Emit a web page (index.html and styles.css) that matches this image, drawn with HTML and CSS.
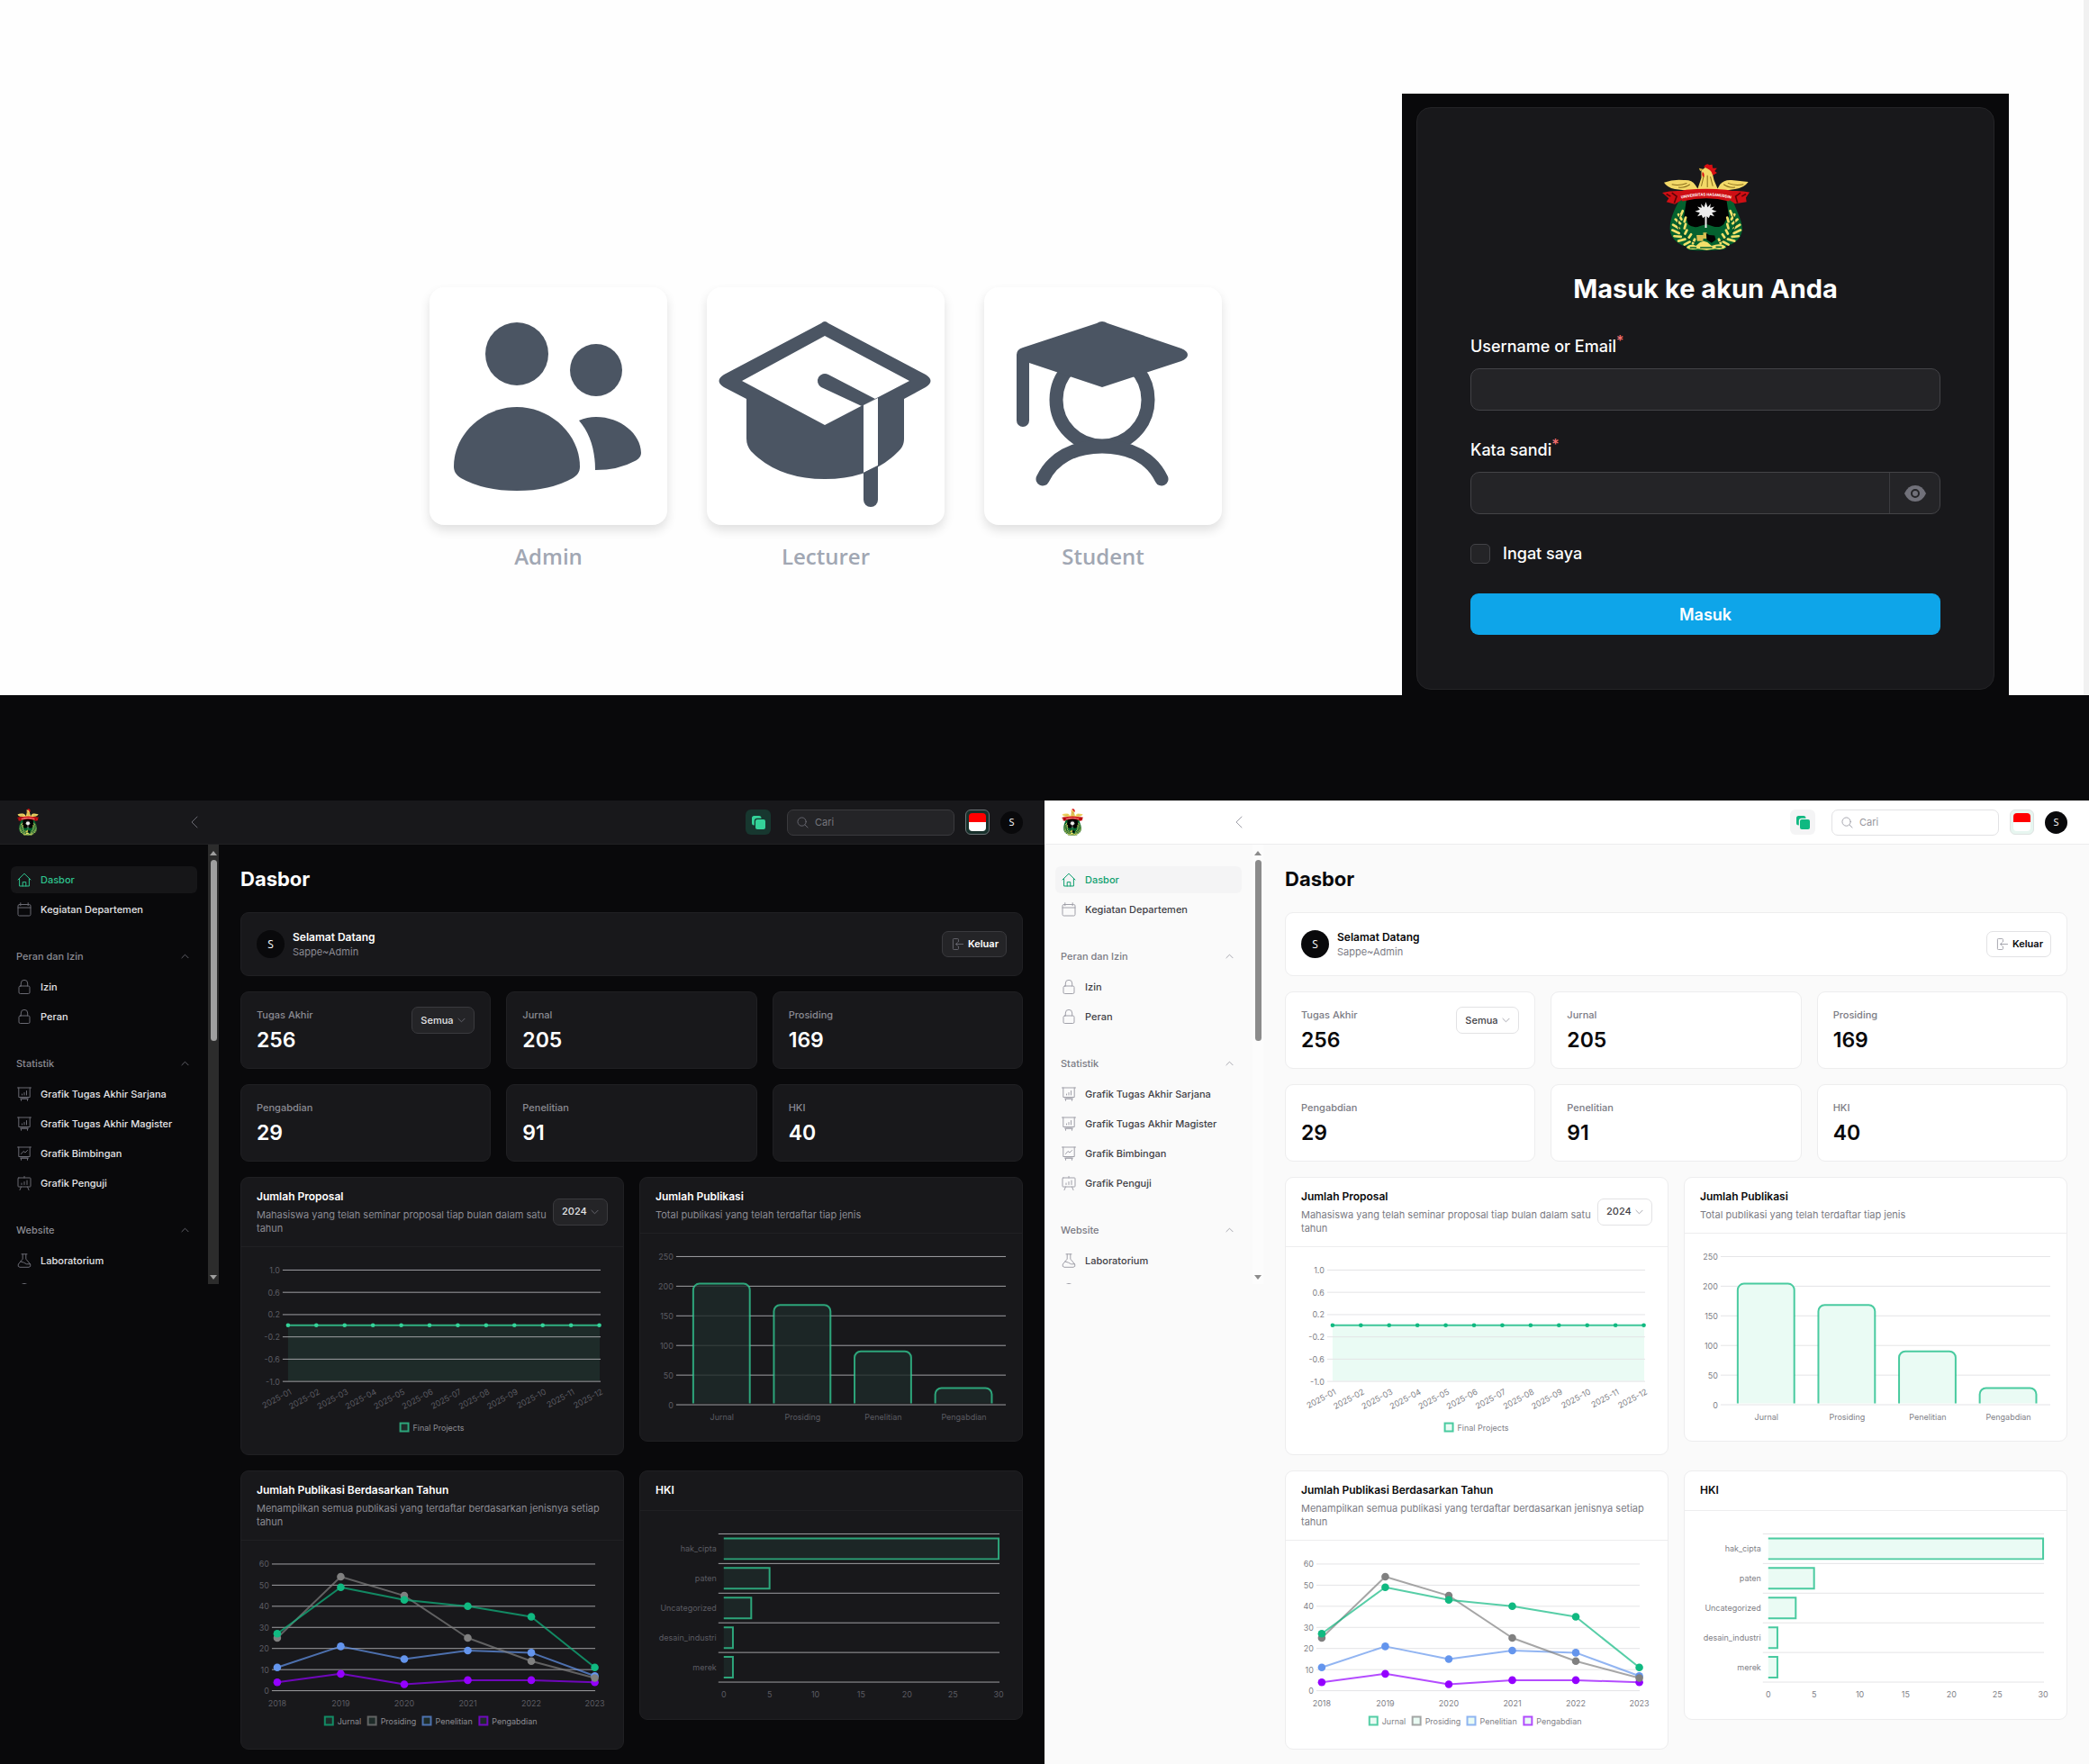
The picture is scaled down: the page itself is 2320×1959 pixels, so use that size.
FILE: index.html
```html
<!DOCTYPE html>
<html lang="id">
<head>
<meta charset="utf-8">
<meta name="viewport" content="width=device-width, initial-scale=1">
<title>Dasbor Departemen</title>
<link rel="stylesheet" href="styles.css">
</head>
<body>

<svg class="sprite" width="0" height="0" aria-hidden="true">
  <symbol id="logo" viewBox="20 22 290 290" preserveAspectRatio="none">
    <path d="M84 128C62 170 44 205 46 240C49 275 82 296 112 298C100 290 96 306 112 308Q167 312 224 306C238 302 230 290 222 296C256 292 284 272 286 238C286 206 262 172 250 128Z" fill="#04622f"/>
    <path d="M102 130L92 200Q104 206 106 222Q124 238 146 228L167 222L190 230Q212 236 226 220Q230 206 242 200L232 130Z" fill="#020202"/>
    <g stroke="#f3e06a" stroke-width="8" stroke-linecap="round" fill="none">
      <path d="M88 178l-6 14M74 190l10 16M64 206l16 14M56 224l20 12M54 242l22 10M60 262l22 2M74 278l22-6M94 290l18-10M98 200l-4 14M98 222l-4 14M102 242l-6 12M116 256l-8 12M128 272l-6 14"/>
      <path d="M246 178l6 14M260 190l-10 16M270 206l-16 14M278 224l-20 12M280 242l-22 10M274 262l-22 2M260 278l-22-6M240 290l-18-10M236 200l4 14M236 222l4 14M232 242l6 12M220 256l8 12M208 272l6 14"/>
    </g>
    <path d="M80 190Q58 230 92 260Q110 276 130 284M254 190Q276 230 242 260Q226 276 204 284" fill="none" stroke="#0b3f1f" stroke-width="3"/>
    <path d="M100 300Q112 284 132 294L146 282L158 278L170 282L184 294Q216 282 232 298Q220 310 196 304L168 308L138 304Q114 310 100 300Z" fill="#f3e06a"/>
    <path d="M112 300h22M146 300h40M198 298h20" stroke="#04622f" stroke-width="5"/>
    <path d="M134 258h22v-8h12v20h-12v8h-20z" fill="#d8bf50"/>
    <path d="M166 252l10 6 18 2 4 14-14 10-16-10z" fill="#020202"/>
    <path d="M165 148l6 18 10-12-2 14 14-4-8 10 16 6-16 4 8 12-14-4-4 10-7-6v38h-6v-38l-7 6-4-10-14 4 8-12-16-4 16-6-8-10 14 4-2-14 10 12z" fill="#eee"/>
    <path d="M26 84Q58 72 92 76Q118 74 130 92L138 104L150 68L150 44L166 32L184 42L192 76L204 104L212 90Q226 74 250 76L306 82Q292 102 262 106L232 110H100L62 106Q36 100 26 84Z" fill="#f3d968"/>
    <path d="M52 90q24 6 50-4M74 100q22 2 38-10M290 90q-28 6-52-4M262 100q-22 2-38-10M158 62l-8 34M170 60v40M180 64l8 32" fill="none" stroke="#8a6d1c" stroke-width="3"/>
    <path d="M142 36l16 4-12 6z" fill="#d9b43e"/>
    <path d="M158 32Q168 18 176 26L186 24L188 36L202 36L194 46L202 52L188 60Q184 44 170 38Z" fill="#d80f12"/>
    <path d="M154 48q8 6 4 18q-8-4-4-18z" fill="#d80f12"/>
    <path d="M20 118Q50 110 84 112L100 108Q168 102 232 108L252 112Q284 110 310 116L298 134L300 148L262 154L244 142L242 146Q168 126 88 146L84 142L62 156L34 148L42 136Z" fill="#cf0f14"/>
    <path d="M52 118l16 12-8 22M280 118l-16 12 6 22M34 122l14 8M298 122l-14 8" stroke="#5e0306" stroke-width="5" fill="none"/>
    <path id="ribbon" d="M80 138Q166 118 252 138" fill="none"/>
    <text font-family="Roboto, sans-serif" font-size="13" font-weight="700" fill="#fff"><textPath href="#ribbon" startOffset="50%" text-anchor="middle">UNIVERSITAS HASANUDDIN</textPath></text>
  </symbol>
  <symbol id="i-home" viewBox="0 0 16 16"><path d="M1 8L8 1.2 15 8M2.6 6.6V15h10.8V6.6M6.2 15v-4.4h3.6V15"/></symbol>
  <symbol id="i-calendar" viewBox="0 0 16 16"><rect x="1" y="2.5" width="14" height="12.500" rx="1.500"/><path d="M1 6h14M3.800.7v3M12.200.7v3"/></symbol>
  <symbol id="i-lock" viewBox="0 0 16 16"><rect x="2" y="7" width="12" height="8.500" rx="1.500"/><path d="M4.300 7V4a3.700 3.700 0 0 1 7.400 0v3"/></symbol>
  <symbol id="i-board-bars" viewBox="0 0 16 16"><path d="M.5 1h15M1.800 1v10.500h12.400V1M4.500 15.300v-2.200h7v2.200M3.500 13.100h9M5.500 9v-1M8 9V6.500M10.500 9V4.500"/></symbol>
  <symbol id="i-board-line" viewBox="0 0 16 16"><path d="M.5 1h15M1.800 1v10.500h12.400V1M4.500 15.300v-2.200h7v2.200M3.500 13.100h9M4.500 8.500l2.500-3 2 1.500 2.500-2.500"/></symbol>
  <symbol id="i-easel" viewBox="0 0 16 16"><rect x="1" y="2" width="14" height="10" rx=".8"/><path d="M8 .3V2M4.500 12l-1.500 3.500M11.500 12l1.500 3.500M5 9.500V8M8 9.500v-3M11 9.500V5"/></symbol>
  <symbol id="i-flask" viewBox="0 0 16 16"><path d="M5 .8h6M6.200.8v5.400L1.300 12Q.3 15 3 15.300h10Q15.700 15 14.700 12L9.800 6.200V.8M4 9q4 1 6.500 2.800h4"/></symbol>
  <symbol id="i-up" viewBox="0 0 10 6"><path d="M1 5l4-4 4 4"/></symbol>
  <symbol id="i-down" viewBox="0 0 10 6"><path d="M1 1l4 4 4-4"/></symbol>
  <symbol id="i-left" viewBox="0 0 8 14"><path d="M7 1L1 7l6 6"/></symbol>
  <symbol id="i-search" viewBox="0 0 14 14"><circle cx="6" cy="6" r="5"/><path d="M9.800 9.800L13 13"/></symbol>
  <symbol id="i-exit" viewBox="0 0 14 14"><path d="M8 4V1.500a1 1 0 0 0-1-1H2.500a1 1 0 0 0-1 1v11a1 1 0 0 0 1 1H7a1 1 0 0 0 1-1V10M13.500 7H5M7 5L5 7l2 2"/></symbol>
  <symbol id="i-copy" viewBox="0 0 15 15"><path d="M2.500 0H8a2.500 2.500 0 0 1 2.500 2.500v.3H5.800A3 3 0 0 0 2.800 5.800v4.700h-.3A2.500 2.500 0 0 1 0 8V2.500A2.500 2.500 0 0 1 2.500 0Z"/><rect x="4" y="4" width="11" height="11" rx="2"/></symbol>
</svg>

<section class="hero">
  <nav class="roles" aria-label="Roles">
    <a class="role" href="#admin">
      <svg class="role-art" viewBox="0 0 264 264" aria-hidden="true">
        <circle cx="97" cy="74" r="35"/><circle cx="185" cy="92" r="29"/>
        <path d="M97 133C60 133 27 163 27 199C27 205 30 209 35 212Q60 226 97 226Q134 226 159 212C164 209 167 205 167 199C167 163 134 133 97 133Z"/>
        <path d="M166 148Q175 144 185 144C212 144 235 163 235 184C235 188 232 191 228 193Q210 203 184 203C184 180 178 162 166 148Z"/>
      </svg>
      <span class="role-name">Admin</span>
    </a>
    <a class="role" href="#lecturer">
      <svg class="role-art" viewBox="0 0 264 264" aria-hidden="true">
        <path fill-rule="evenodd" d="M127 40Q131 36 135 40L243 97Q254 104 243 111L219 124V168C219 174 217 178 213 182Q183 213 131 213Q79 213 49 182C46 178 44 174 44 168V124L19 111Q8 104 19 97ZM131 54L39 104L131 153L225 104Z"/>
        <path d="M135 97L187 124L172 132L127 111A8 8 0 0 1 135 97Z"/>
        <path class="cut" d="M174 131L190 123V198L174 206Z"/>
        <path d="M174 206L190 198V236a8 8 0 0 1-16 0Z"/>
      </svg>
      <span class="role-name">Lecturer</span>
    </a>
    <a class="role" href="#student">
      <svg class="role-art" viewBox="0 0 264 264" aria-hidden="true">
        <g class="line"><circle cx="131" cy="125" r="51"/><path d="M65 213C76 190 99 177 131 177C163 177 186 190 197 213"/></g>
        <path d="M125 40Q131 36 137 40L219 68Q226 71 226 75Q226 79 219 82L131 111L50 84V148a7 7 0 0 1-14 0V75Q36 69 43 67Z"/>
      </svg>
      <span class="role-name">Student</span>
    </a>
  </nav>

  <div class="login-frame">
    <form class="login">
      <svg class="login-logo" role="img" aria-label="Logo"><use href="#logo"/></svg>
      <h1 class="login-title">Masuk ke akun Anda</h1>
      <div class="field">
        <label class="field-label" for="username">Username or Email<sup class="req">*</sup></label>
        <input class="box" id="username" type="text">
      </div>
      <div class="field">
        <label class="field-label" for="password">Kata sandi<sup class="req">*</sup></label>
        <div class="box box-group">
          <input class="box-input" id="password" type="password">
          <button class="reveal" type="button" aria-label="Tampilkan kata sandi">
            <svg width="24" height="18" viewBox="0 0 24 18" aria-hidden="true"><path d="M12 0Q20 0 24 9Q20 18 12 18Q4 18 0 9Q4 0 12 0Z" fill="#71717a"/><circle cx="12" cy="9" r="4" fill="none" stroke="#242427" stroke-width="2"/></svg>
          </button>
        </div>
      </div>
      <label class="remember"><input class="tick" type="checkbox">Ingat saya</label>
      <button class="submit" type="submit">Masuk</button>
    </form>
  </div>
</section>

<main class="panels">
  <div class="panel dark"></div>
  <div class="panel light"></div>
</main>

<template id="dashboard">
  <header class="topbar">
    <div class="brand">
      <svg class="brand-logo" role="img" aria-label="Logo"><use href="#logo"/></svg>
      <button class="plain" type="button" aria-label="Ciutkan"><svg class="ico" width="8" height="14"><use href="#i-left"/></svg></button>
    </div>
    <div class="tools">
      <button class="copy" type="button" aria-label="Salin"><svg width="15" height="15"><use href="#i-copy"/></svg></button>
      <label class="search"><svg class="ico" width="13" height="13"><use href="#i-search"/></svg><input type="search" placeholder="Cari" aria-label="Cari"></label>
      <button class="flag" type="button" aria-label="Bahasa Indonesia"><span class="flag-art"></span></button>
      <span class="avatar">S</span>
    </div>
  </header>
  <div class="workspace">
    <aside class="side">
      <nav class="side-nav">
        <div class="group">
          <a class="item active" href="#dasbor"><svg class="ico"><use href="#i-home"/></svg>Dasbor</a>
          <a class="item" href="#kegiatan"><svg class="ico"><use href="#i-calendar"/></svg>Kegiatan Departemen</a>
        </div>
        <div class="group">
          <button class="group-head" type="button">Peran dan Izin<svg class="ico" width="9" height="6"><use href="#i-up"/></svg></button>
          <a class="item" href="#izin"><svg class="ico"><use href="#i-lock"/></svg>Izin</a>
          <a class="item" href="#peran"><svg class="ico"><use href="#i-lock"/></svg>Peran</a>
        </div>
        <div class="group">
          <button class="group-head" type="button">Statistik<svg class="ico" width="9" height="6"><use href="#i-up"/></svg></button>
          <a class="item" href="#sarjana"><svg class="ico"><use href="#i-board-bars"/></svg>Grafik Tugas Akhir Sarjana</a>
          <a class="item" href="#magister"><svg class="ico"><use href="#i-board-bars"/></svg>Grafik Tugas Akhir Magister</a>
          <a class="item" href="#bimbingan"><svg class="ico"><use href="#i-board-line"/></svg>Grafik Bimbingan</a>
          <a class="item" href="#penguji"><svg class="ico"><use href="#i-easel"/></svg>Grafik Penguji</a>
        </div>
        <div class="group">
          <button class="group-head" type="button">Website<svg class="ico" width="9" height="6"><use href="#i-up"/></svg></button>
          <a class="item" href="#lab"><svg class="ico"><use href="#i-flask"/></svg>Laboratorium</a>
          <a class="item" href="#next" aria-label="Berikutnya"><svg class="ico"><use href="#i-lock"/></svg></a>
        </div>
      </nav>
      <div class="scroll" aria-hidden="true"><i class="arrow-up"></i><i class="thumb"></i><i class="arrow-down"></i></div>
    </aside>
    <div class="content">
      <h2 class="page-title">Dasbor</h2>
      <section class="card welcome">
        <span class="avatar big">S</span>
        <div class="who"><h3 class="card-title">Selamat Datang</h3><p class="muted">Sappe~Admin</p></div>
        <button class="logout" type="button"><svg class="ico" width="13" height="13"><use href="#i-exit"/></svg>Keluar</button>
      </section>
      <section class="stats">
        <div class="card stat"><div><p class="muted medium">Tugas Akhir</p><p class="value">256</p></div>
          <span class="pick"><select aria-label="Filter tugas akhir"><option>Semua</option></select><svg class="ico" width="9" height="6"><use href="#i-down"/></svg></span></div>
        <div class="card stat"><div><p class="muted medium">Jurnal</p><p class="value">205</p></div></div>
        <div class="card stat"><div><p class="muted medium">Prosiding</p><p class="value">169</p></div></div>
        <div class="card stat"><div><p class="muted medium">Pengabdian</p><p class="value">29</p></div></div>
        <div class="card stat"><div><p class="muted medium">Penelitian</p><p class="value">91</p></div></div>
        <div class="card stat"><div><p class="muted medium">HKI</p><p class="value">40</p></div></div>
      </section>
      <section class="charts">
        <article class="card chart">
          <div class="chart-head"><div><h3 class="card-title">Jumlah Proposal</h3><p class="muted">Mahasiswa yang telah seminar proposal tiap bulan dalam satu tahun</p></div>
            <span class="pick"><select aria-label="Tahun proposal"><option>2024</option></select><svg class="ico" width="9" height="6"><use href="#i-down"/></svg></span></div>
          <div class="plot" data-chart="proposal"></div>
        </article>
        <article class="card chart">
          <div class="chart-head"><div><h3 class="card-title">Jumlah Publikasi</h3><p class="muted">Total publikasi yang telah terdaftar tiap jenis</p></div></div>
          <div class="plot" data-chart="publikasi"></div>
        </article>
        <article class="card chart">
          <div class="chart-head"><div><h3 class="card-title">Jumlah Publikasi Berdasarkan Tahun</h3><p class="muted">Menampilkan semua publikasi yang terdaftar berdasarkan jenisnya setiap tahun</p></div></div>
          <div class="plot" data-chart="tahunan"></div>
        </article>
        <article class="card chart">
          <div class="chart-head"><div><h3 class="card-title">HKI</h3></div></div>
          <div class="plot" data-chart="hki"></div>
        </article>
      </section>
    </div>
  </div>
</template>

<script src="charts.js"></script>
</body>
</html>
```
FILE: styles.css
```css
* { box-sizing: border-box; }
body { margin: 0; background: #09090b; font-family: Inter, "Liberation Sans", sans-serif; }
h1, h2, h3, p { margin: 0; }
a { color: inherit; text-decoration: none; }
button, input, select { font: inherit; color: inherit; margin: 0; }
svg { display: block; flex: none; }
.sprite { display: none; }

/* Role picker and login */
.hero { display: flex; justify-content: space-between; align-items: flex-start; padding: 104px 83px 0 477px; background: #fefefe; border-right: 6px solid #f1f1f1; }
.roles { display: flex; gap: 44px; padding-top: 215px; }
.role { display: flex; flex-direction: column; gap: 18px; align-items: center; }
.role-art { width: 264px; height: 264px; border-radius: 16px; background: #fff; box-shadow: 0 6px 12px rgba(0, 0, 0, .12); fill: #4b5563; }
.role-art .cut { fill: #fff; }
.role-art .line { fill: none; stroke: #4b5563; stroke-width: 15px; stroke-linecap: round; }
.role-name { font: 600 24px/34px "Open Sans", "Noto Sans", sans-serif; color: #a1a7b3; }

.login-frame { flex: none; width: 674px; padding: 15px 16px 6px; background: #09090b; }
.login { display: flex; flex-direction: column; gap: 32px; padding: 62px 59px 60px; border: 1px solid #242427; border-radius: 16px; background: #18181b; color: #fff; font-size: 18px; font-weight: 500; }
.login-logo { align-self: center; width: 97px; height: 97px; }
.login-title { margin-top: -11px; font-size: 29px; line-height: 41px; font-weight: 700; text-align: center; }
.field { display: flex; flex-direction: column; gap: 12px; }
.field-label { line-height: 24px; }
.req { color: #f87171; font-size: 16px; line-height: 1px; }
.box { width: 100%; height: 47px; border: 1px solid #434347; border-radius: 10px; background: #242427; padding: 0 14px; outline: none; }
.box-group { display: flex; padding: 0; }
.box-input { flex: 1; min-width: 0; border: 0; background: none; padding: 0 14px; outline: none; }
.reveal { display: flex; align-items: center; justify-content: center; width: 56px; border: 0; border-left: 1px solid #3b3b3f; background: none; }
.remember { display: flex; align-items: center; gap: 14px; line-height: 24px; }
.tick { appearance: none; width: 22px; height: 22px; border: 1px solid #434347; border-radius: 5px; background: #242427; }
.submit { height: 46px; border: 0; border-radius: 9px; background: #0ea5e9; color: #fff; font-weight: 600; }

/* Dashboards */
.panels { display: grid; grid-template-columns: 1fr 1fr; padding-top: 117px; }
.panel { background: var(--bg); color: var(--text); font-size: 11px; line-height: 15px; }
.dark {
  --bg: #09090b; --surface: #18181b; --edge: #202023; --text: #fff; --nav: #e4e4e7; --muted: #8b8b93; --icon: #6a6a73;
  --active: #161618; --accent: #2fc48e; --control: #242427; --control-edge: #3a3a3e; --copy: #17372f; --copy-icon: #34d399; --ring: #6a7275; --ringbg: #17302b;
  --grid: #a0a0a4; --tick: #5c5c63; --legend: #8d8d94; --fill: #1e2b29; --bar: #34d399; --track: #2c2c2c; --thumb: #9f9f9f;
}
.light {
  --bg: #fafafa; --surface: #fff; --edge: #ededee; --text: #09090b; --nav: #3f3f46; --muted: #7b7b84; --icon: #a0a0a9;
  --active: #f4f4f5; --accent: #0d9f6e; --control: #fff; --control-edge: #e2e2e4; --copy: #f4f4f5; --copy-icon: #10b981; --ring: #dfe3e2; --ringbg: #e7f6f0;
  --grid: #e4e4e6; --tick: #808086; --legend: #808086; --fill: #eafbf4; --bar: #10b981; --track: #fcfcfc; --thumb: #8b8b8b;
}
.ico { fill: none; stroke: var(--icon); stroke-width: 1px; stroke-linecap: round; stroke-linejoin: round; }
.plain { border: 0; background: none; padding: 0; }

.topbar { display: flex; justify-content: space-between; align-items: center; height: 49px; padding: 0 24px 0 19px; background: var(--surface); border-bottom: 1px solid var(--edge); }
.brand { display: flex; justify-content: space-between; align-items: center; width: 201px; }
.brand-logo { width: 24px; height: 30px; }
.tools { display: flex; align-items: center; gap: 12px; }
.copy { display: flex; align-items: center; justify-content: center; width: 28px; height: 28px; margin-right: 6px; padding: 0; border: 0; border-radius: 6px; background: var(--copy); fill: var(--copy-icon); }
.search { display: flex; align-items: center; gap: 7px; width: 186px; height: 29px; padding: 0 10px; border: 1px solid var(--control-edge); border-radius: 7px; background: var(--control); }
.search input { flex: 1; min-width: 0; border: 0; padding: 0; background: none; outline: none; appearance: none; }
.search input::placeholder { color: var(--muted); opacity: .8; }
.flag { width: 27px; height: 28px; padding: 3px; border: 1px solid var(--ring); border-radius: 6px; background: var(--ringbg); }
.flag-art { display: block; height: 20px; border-radius: 4px; background: linear-gradient(#f00 50%, #fff 50%); }
.avatar { display: flex; align-items: center; justify-content: center; width: 25px; height: 25px; border-radius: 50%; background: #09090b; color: #fff; font: 400 11px/14px "Open Sans", sans-serif; }
.avatar.big { width: 31px; height: 31px; font-size: 12px; }

.workspace { display: flex; align-items: flex-start; }
.side { display: flex; flex: none; width: 243px; height: 488px; overflow: hidden; }
.side-nav { display: flex; flex: 1; flex-direction: column; gap: 22px; padding: 24px 12px 0; }
.group { display: flex; flex-direction: column; gap: 3px; }
.group-head { display: flex; flex: none; justify-content: space-between; align-items: center; height: 30px; margin-bottom: 1px; padding: 0 9px 0 6px; border: 0; background: none; color: var(--muted); font-weight: 500; }
.item { display: flex; flex: none; align-items: center; gap: 10px; height: 30px; padding: 0 7px; border-radius: 6px; color: var(--nav); font-weight: 500; }
.item .ico { width: 16px; height: 16px; }
.item.active { background: var(--active); color: var(--accent); }
.item.active .ico { stroke: var(--accent); }
.scroll { display: flex; flex-direction: column; align-items: center; width: 12px; padding: 7px 0 5px; background: var(--track); }
.thumb { width: 7px; height: 201px; margin: 5px 0 auto; border-radius: 4px; background: var(--thumb); }
.arrow-up, .arrow-down { border: 4px solid transparent; border-top-width: 0; border-bottom: 5px solid var(--thumb); }
.arrow-down { transform: rotate(180deg); }

.content { flex: 1; min-width: 0; display: flex; flex-direction: column; gap: 17px; padding: 24px 24px 17px; }
.page-title { margin-bottom: 6px; font-size: 22px; line-height: 28px; font-weight: 700; }
.card { border: 1px solid var(--edge); border-radius: 9px; background: var(--surface); }
.card-title { font-size: 12px; line-height: 20px; font-weight: 600; }
.muted { color: var(--muted); }
.medium { font-weight: 500; }
.welcome { display: flex; align-items: center; gap: 9px; height: 71px; padding: 0 17px; }
.who { flex: 1; }
.who .card-title { line-height: 18px; }
.logout { display: flex; align-items: center; gap: 5px; height: 29px; padding: 0 8px 0 10px; border: 1px solid var(--control-edge); border-radius: 7px; background: var(--control); font-weight: 600; }
.stats { display: grid; grid-template-columns: repeat(3, 1fr); gap: 17px; }
.stat { display: flex; justify-content: space-between; align-items: flex-start; height: 86px; padding: 16px 17px; }
.stat .muted { line-height: 18px; }
.value { font-size: 23px; line-height: 38px; font-weight: 600; }
.pick { position: relative; flex: none; }
.pick select { appearance: none; display: block; height: 30px; padding: 0 22px 0 9px; border: 1px solid var(--control-edge); border-radius: 7px; background: var(--control); color: var(--nav); font-weight: 500; outline: none; }
.pick .ico { position: absolute; right: 10px; top: 12px; pointer-events: none; }
.charts { display: grid; grid-template-columns: 1fr 1fr; align-items: start; gap: 17px; }
.chart-head { display: flex; justify-content: space-between; align-items: center; gap: 3px; padding: 11px 17px 12px; border-bottom: 1px solid var(--edge); }
.chart-head .muted { margin-top: 3px; }

.plot svg { width: 100%; height: auto; font-size: 9px; }
.plot text { fill: var(--tick); dominant-baseline: central; }
.plot .key { fill: var(--legend); }
.plot .grid { stroke: var(--grid); stroke-width: 1px; }
.plot .area { fill: var(--fill); }
.plot .edge { fill: none; stroke: var(--bar); stroke-width: 2px; stroke-opacity: .8; }
.plot .bar { fill: var(--fill); fill-opacity: .8; stroke: var(--bar); stroke-width: 2px; stroke-opacity: .75; }
.plot .swatch { fill: var(--fill); stroke: var(--bar); stroke-width: 2px; stroke-opacity: .75; }
.plot .dot { fill: var(--bar); }
.plot .trend { fill: none; stroke-width: 2px; stroke-opacity: .7; stroke-linejoin: round; }
.light .plot .bar { fill-opacity: 1; }
```
FILE: charts.js
```js
const line = (x1, y1, x2, y2) => `<line class="grid" x1="${x1}" y1="${y1}" x2="${x2}" y2="${y2}"/>`;
const label = (x, y, text, anchor = 'middle', extra = '') => `<text x="${x}" y="${y}" text-anchor="${anchor}" ${extra}>${text}</text>`;
const frame = body => `<svg viewBox="0 0 425 231" role="img">${body}</svg>`;

// Horizontal grid lines with their value at the left, top to bottom
function rows(values, left, right, top, bottom) {
  return values.map((v, i) => {
    const y = top + (bottom - top) * i / (values.length - 1);
    return line(left, y, right, y) + label(left - 3, y, v, 'end');
  }).join('');
}

function proposal() {
  const x = i => 52 + i * 31.5;
  const months = Array.from({ length: 12 }, (_, i) => '2025-' + String(i + 1).padStart(2, '0'));
  return frame(
    '<rect class="area" x="52" y="87" width="347" height="62"/>' +
    rows(['1.0', '0.6', '0.2', '-0.2', '-0.6', '-1.0'], 46, 400, 25.5, 149.5) +
    `<path class="edge" d="M52 87H${x(11)}"/>` +
    months.map((m, i) => `<circle class="dot" cx="${x(i)}" cy="87" r="2.300"/>` +
      label(x(i) + 3, 160, m, 'end', `transform="rotate(-28 ${x(i) + 3} 160)"`)).join('') +
    '<rect class="swatch" x="177" y="196" width="9" height="9"/>' +
    '<text class="key" x="191" y="201">Final Projects</text>');
}

function publikasi() {
  const data = [['Jurnal', 205], ['Prosiding', 169], ['Penelitian', 91], ['Pengabdian', 29]];
  return frame(
    rows([250, 200, 150, 100, 50, 0], 40, 407, 25.5, 190.5) +
    data.map(([name, n], i) => {
      const x = 59 + i * 89.8, top = 191 - n * .66;
      return `<path class="bar" d="M${x} 189V${top + 7}a7 7 0 0 1 7-7h49a7 7 0 0 1 7 7V189"/>` + label(x + 32, 204, name);
    }).join(''));
}

function tahunan() {
  const x = i => 40 + i * 70.7, y = n => 167 - n * 2.35;
  const series = [
    ['Jurnal', '#10b981', [27, 49, 43, 40, 35, 11], 93],
    ['Prosiding', '#808080', [25, 54, 45, 25, 14, 6], 141],
    ['Penelitian', '#6495ed', [11, 21, 15, 19, 18, 7], 202],
    ['Pengabdian', '#9400ff', [4, 8, 3, 5, 5, 4], 265],
  ];
  const draw = ([, color, values]) =>
    `<polyline class="trend" stroke="${color}" points="${values.map((v, i) => x(i) + ',' + y(v)).join(' ')}"/>` +
    values.map((v, i) => `<circle cx="${x(i)}" cy="${y(v)}" r="4.300" fill="${color}"/>`).join('');
  return frame(
    rows([60, 50, 40, 30, 20, 10, 0], 34, 394, 26, 167) +
    [...series].reverse().map(draw).join('') +
    [2018, 2019, 2020, 2021, 2022, 2023].map((n, i) => label(x(i), 181, n)).join('') +
    series.map(([name, color, , at]) =>
      `<rect x="${at}" y="196" width="9" height="9" fill="var(--fill)" stroke="${color}" stroke-width="2" stroke-opacity=".7"/>` +
      `<text class="key" x="${at + 14}" y="201">${name}</text>`).join(''));
}

function hki() {
  const data = [['hak_cipta', 30], ['paten', 5], ['Uncategorized', 3], ['desain_industri', 1], ['merek', 1]];
  const y = i => 25.5 + i * 33;
  return frame(
    [0, 1, 2, 3, 4, 5].map(i => line(87, y(i), 400, y(i))).join('') +
    data.map(([name, n], i) => {
      const top = y(i) + 5, right = 93 + n * 10.2;
      return `<path class="bar" d="M93 ${top}H${right}V${top + 23}H93"/>` + label(85, top + 11, name, 'end');
    }).join('') +
    [0, 5, 10, 15, 20, 25, 30].map((n, i) => label(93 + i * 51, 204, n)).join(''));
}

const charts = { proposal, publikasi, tahunan, hki };
const template = document.getElementById('dashboard');
document.querySelectorAll('.panel').forEach(panel => {
  panel.append(template.content.cloneNode(true));
  panel.querySelectorAll('[data-chart]').forEach(plot => { plot.innerHTML = charts[plot.dataset.chart](); });
});
```
